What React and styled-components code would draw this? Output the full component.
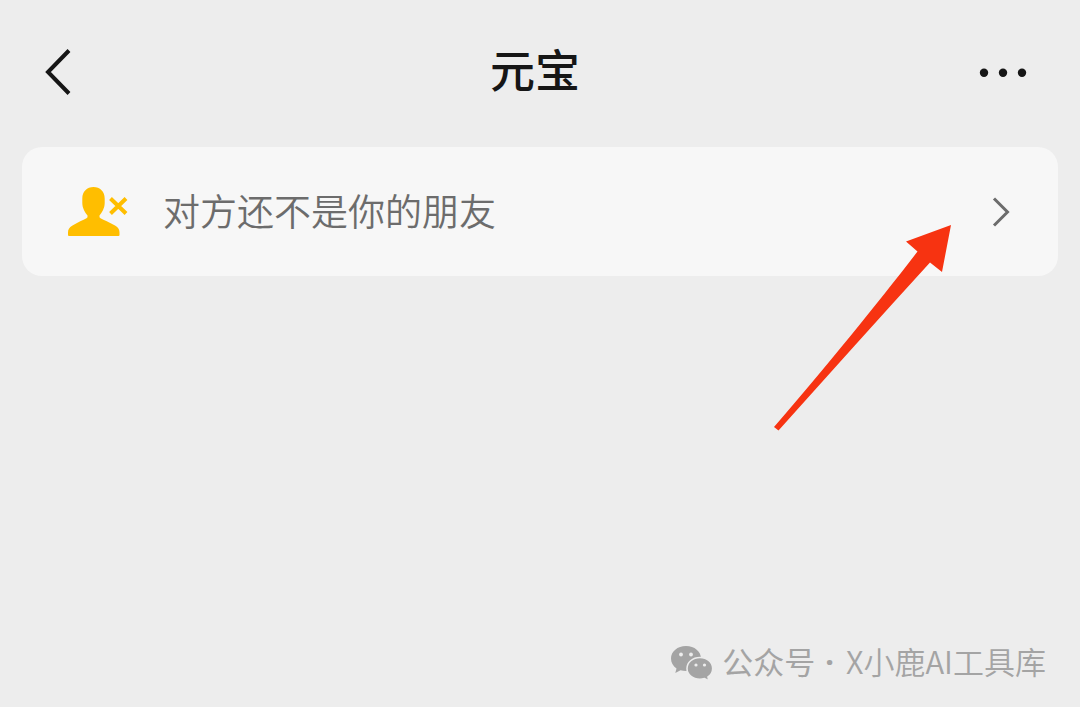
import React from "react";
import styled, { createGlobalStyle } from "styled-components";

const GlobalStyle = createGlobalStyle`
  *, *::before, *::after { box-sizing: border-box; }
  body {
    margin: 0;
    background: #ededed;
    font-family: "Noto Sans CJK SC", "Noto Sans", sans-serif;
  }
`;

const Page = styled.div`
  display: flex;
  flex-direction: column;
  min-height: 100vh;
  background: #ededed;
`;

const Header = styled.header`
  display: grid;
  grid-template-columns: 1fr auto 1fr;
  align-items: center;
  padding: 40px 45px 43px 35px;
`;

const IconButton = styled.button`
  display: flex;
  align-items: center;
  justify-content: center;
  justify-self: ${(p) => p.$side};
  width: 64px;
  height: 64px;
  padding: 0;
  border: 0;
  background: none;
  color: #161616;
  cursor: pointer;
  margin: ${(p) => (p.$side === "end" ? "0" : "0 0 0 -9px")};
`;

const Title = styled.h1`
  margin: 0;
  padding-bottom: 6px;
  font-size: 45px;
  line-height: 58px;
  font-weight: 500;
  color: #161616;
`;

const Main = styled.main`
  flex: 1;
  padding: 0 22px;
`;

const NoticeWrap = styled.div`
  position: relative;
`;

const Notice = styled.button`
  display: flex;
  align-items: center;
  width: 100%;
  padding: 37px 48px 36px 45px;
  border: 0;
  border-radius: 20px;
  background: #f7f7f7;
  color: #6c6c6c;
  font-family: inherit;
  font-size: 37px;
  font-weight: 350;
  line-height: 52px;
  text-align: left;
  cursor: pointer;
`;

const NoticeText = styled.span`
  flex: 1;
  margin-left: 34px;
  padding-bottom: 4px;
`;

const Pointer = styled.svg`
  position: absolute;
  top: 73px;
  right: 103px;
  pointer-events: none;
`;

const Footer = styled.footer`
  display: flex;
  align-items: center;
  justify-content: flex-end;
  padding: 0 34px 22px;
  color: #a4a4a4;
  font-size: 31px;
  line-height: 40px;
`;

const Account = styled.span`
  margin-left: 8px;
  padding-bottom: 4px;
`;

const Separator = styled(Account)`
  margin: 0 12px 0 10px;
  font-family: "Noto Sans", sans-serif;
  font-weight: 700;
`;

const AccountName = styled.span`
  padding-bottom: 4px;
  font-weight: 350;
`;

function BackIcon() {
  return (
    <svg width="28" height="48" viewBox="0 0 28 48" fill="none" aria-hidden="true">
      <path d="M25 2.5 4 24 25 45.5" stroke="currentColor" strokeWidth="4" />
    </svg>
  );
}

function MoreIcon() {
  return (
    <svg width="48" height="12" viewBox="0 0 48 12" fill="currentColor" aria-hidden="true">
      <circle cx="5" cy="6.700" r="4.2" />
      <circle cx="24" cy="6.700" r="4.2" />
      <circle cx="43" cy="6.700" r="4.2" />
    </svg>
  );
}

function StrangerIcon() {
  return (
    <svg width="62" height="52" viewBox="0 0 62 52" aria-hidden="true">
      <path
        d="M26.500 1C33 1 37.700 5.500 37.700 12.500V17C37.700 22 35 26.500 32.500 29.500Q32 31.500 33.500 32.300C37 34.500 42 36 48 39.500C51.500 41.500 52.500 43.500 52.500 46.500V49Q52.500 50 51.500 50H2Q1 50 1 49V46.500C1 43.500 2 41.500 5.500 39.500C11 36 16 34.500 19.500 32.300Q21 31.500 20.500 29.500C18 26.500 15.300 22 15.300 17V12.500C15.300 5.500 20 1 26.500 1Z"
        fill="#ffbe00"
      />
      <path d="M43.500 12.500 59 27.500M59 12.500 43.500 27.500" stroke="#ffbe00" strokeWidth="4" />
    </svg>
  );
}

function ForwardIcon() {
  return (
    <svg width="18" height="32" viewBox="0 0 18 32" fill="none" aria-hidden="true">
      <path d="M2 2.500 15.500 16 2 29.500" stroke="currentColor" strokeWidth="3" />
    </svg>
  );
}

function WechatIcon() {
  return (
    <svg width="44" height="38" viewBox="0 0 44 38" aria-hidden="true">
      <path
        d="M16 2C7.500 2 1 7.500 1 14.500C1 18.500 3 22 6.500 24.500L5.300 29L10.500 26.300C12.300 26.800 14 27 16 27C24.500 27 31 21.500 31 14.500C31 7.500 24.500 2 16 2Z"
        fill="#a4a4a4"
      />
      <path
        d="M30 13.500C22.500 13.500 17 18.500 17 24.500C17 30.500 22.500 35.300 30 35.300C31.500 35.300 33 35 34.500 34.600L39 37L38 33C41 31 42.700 28 42.700 24.500C42.700 18.500 37.200 13.500 30 13.500Z"
        fill="#a4a4a4"
        stroke="#ededed"
        strokeWidth="1.600"
      />
      <g fill="#ededed">
        <circle cx="11" cy="10.500" r="1.900" />
        <circle cx="21" cy="10.500" r="1.900" />
        <circle cx="26" cy="21" r="1.600" />
        <circle cx="34.500" cy="21" r="1.600" />
      </g>
    </svg>
  );
}

export default function App() {
  return (
    <Page>
      <GlobalStyle />
      <Header>
        <IconButton type="button" $side="start" aria-label="返回">
          <BackIcon />
        </IconButton>
        <Title>元宝</Title>
        <IconButton type="button" $side="end" aria-label="更多">
          <MoreIcon />
        </IconButton>
      </Header>
      <Main>
        <NoticeWrap>
          <Notice type="button">
            <StrangerIcon />
            <NoticeText>对方还不是你的朋友</NoticeText>
            <ForwardIcon />
          </Notice>
          <Pointer width="185" height="214" viewBox="0 0 185 214" aria-hidden="true">
            <path d="M181 5 136 21.500 147.500 31.500 C108 83 56 147 4 207L8.500 210.500C60 153 110 97 160 42.500L172 52Z" fill="#f73311" />
          </Pointer>
        </NoticeWrap>
      </Main>
      <Footer>
        <WechatIcon />
        <Account>公众号</Account>
        <Separator>·</Separator>
        <AccountName>X小鹿AI工具库</AccountName>
      </Footer>
    </Page>
  );
}
